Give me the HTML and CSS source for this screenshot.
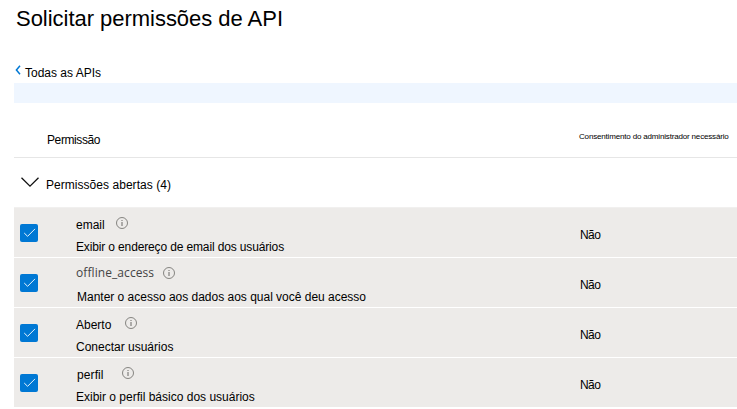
FILE: index.html
```html
<!DOCTYPE html>
<html lang="pt-BR">
<head>
<meta charset="utf-8">
<title>Solicitar permissões de API</title>
<link rel="stylesheet" href="styles.css">
</head>
<body>
<svg class="defs" width="0" height="0" aria-hidden="true">
  <symbol id="check" viewBox="0 0 18 18"><path d="M4.2 9 7.600 12.300 15 4.900" fill="none" stroke="#fff" stroke-opacity=".9" stroke-width="1"/></symbol>
  <symbol id="info" viewBox="0 0 12 12"><circle cx="6" cy="6" r="5.500" fill="none" stroke="#6b6966" stroke-width=".8"/><path d="M6 5v4M6 3v1" fill="none" stroke="#6b6966" stroke-width="1"/></symbol>
</svg>
<main class="panel">
  <h1 class="title">Solicitar permissões de API</h1>
  <a class="back">
    <svg class="back-icon" width="6" height="10" viewBox="0 0 6 10"><path d="M5 .8 1.400 5 5 9.200" fill="none" stroke="#0078d4" stroke-width="1.500"/></svg>
    <span class="back-text">Todas as APIs</span>
  </a>
  <div class="banner"></div>
  <div class="head">
    <span class="head-name">Permissão</span>
    <span class="head-consent">Consentimento do administrador necessário</span>
  </div>
  <div class="group">
    <svg width="18" height="11" viewBox="0 0 18 11"><path d="M.5 .7 9 9.200 17.500 .7" fill="none" stroke="#111" stroke-width="1.300"/></svg>
    <span class="group-text">Permissões abertas (4)</span>
  </div>
  <div class="row">
    <span class="box"><svg width="18" height="18"><use href="#check"/></svg></span>
    <div class="info">
      <div class="name"><span class="name-text">email</span><svg width="12" height="12"><use href="#info"/></svg></div>
      <div class="desc tight">Exibir o endereço de email dos usuários</div>
    </div>
    <span class="consent">Não</span>
  </div>
  <div class="row">
    <span class="box"><svg width="18" height="18"><use href="#check"/></svg></span>
    <div class="info">
      <div class="name scope"><span class="name-text">offline_access</span><svg width="12" height="12"><use href="#info"/></svg></div>
      <div class="desc inset">Manter o acesso aos dados aos qual você deu acesso</div>
    </div>
    <span class="consent">Não</span>
  </div>
  <div class="row">
    <span class="box"><svg width="18" height="18"><use href="#check"/></svg></span>
    <div class="info">
      <div class="name open"><span class="name-text">Aberto</span><svg width="12" height="12"><use href="#info"/></svg></div>
      <div class="desc">Conectar usuários</div>
    </div>
    <span class="consent">Não</span>
  </div>
  <div class="row">
    <span class="box"><svg width="18" height="18"><use href="#check"/></svg></span>
    <div class="info">
      <div class="name profile"><span class="name-text">perfil</span><svg width="12" height="12"><use href="#info"/></svg></div>
      <div class="desc">Exibir o perfil básico dos usuários</div>
    </div>
    <span class="consent">Não</span>
  </div>
</main>
</body>
</html>
```
FILE: styles.css
```css
* { box-sizing: border-box; }
body {
  margin: 0;
  background: #fff;
  color: #000;
  font: 12px/16px "Liberation Sans", Arial, sans-serif;
  white-space: nowrap;
  overflow: hidden;
}
svg { display: block; flex: none; }
.defs { position: absolute; }
.panel { padding-left: 14px; height: 409px; }
.title {
  margin: 0;
  height: 65px;
  padding: 5px 0 0 2px;
  font-size: 22px;
  line-height: 27px;
  font-weight: 400;
  letter-spacing: -0.03px;
}
.back { display: flex; height: 18px; }
.back-icon { margin-left: 1px; }
.back-text { margin-left: 4px; }
.banner { height: 20px; background: #eff6ff; }
.head {
  display: grid;
  grid-template-columns: 565px 1fr;
  height: 55px;
  border-bottom: 1px solid #e6e6e6;
}
.head-name { padding: 29px 0 0 33px; letter-spacing: -0.4px; }
.head-consent { padding-top: 26px; font-size: 8px; letter-spacing: -0.17px; }
.group {
  display: flex;
  height: 50px;
  padding: 19px 0 0 7px;
  border-bottom: 1px solid #f1f0ef;
}
.group-text { margin-left: 7px; letter-spacing: 0.04px; }
.row {
  display: grid;
  grid-template-columns: 62px 504px 1fr;
  height: 50px;
  background: #edebe9;
  border-bottom: 1px solid #fff;
}
.box {
  width: 18px;
  height: 18px;
  margin: 16px 0 0 6px;
  border-radius: 2px;
  background: #0078d4;
}
.info { padding-top: 9px; }
.name { display: flex; height: 22px; }
.name-text { width: 40px; }
.tight { letter-spacing: -0.14px; }
.inset { padding-left: 1px; letter-spacing: -0.01px; }
.scope .name-text {
  width: 87px;
  margin-top: -2px;
  font-family: "Open Sans", sans-serif;
  color: #444;
  letter-spacing: 0.08px;
}
.open .name-text { width: 49px; }
.profile .name-text { width: 46px; padding-left: 1px; letter-spacing: 0.1px; }
.consent { padding-top: 19px; letter-spacing: -0.6px; }
```
